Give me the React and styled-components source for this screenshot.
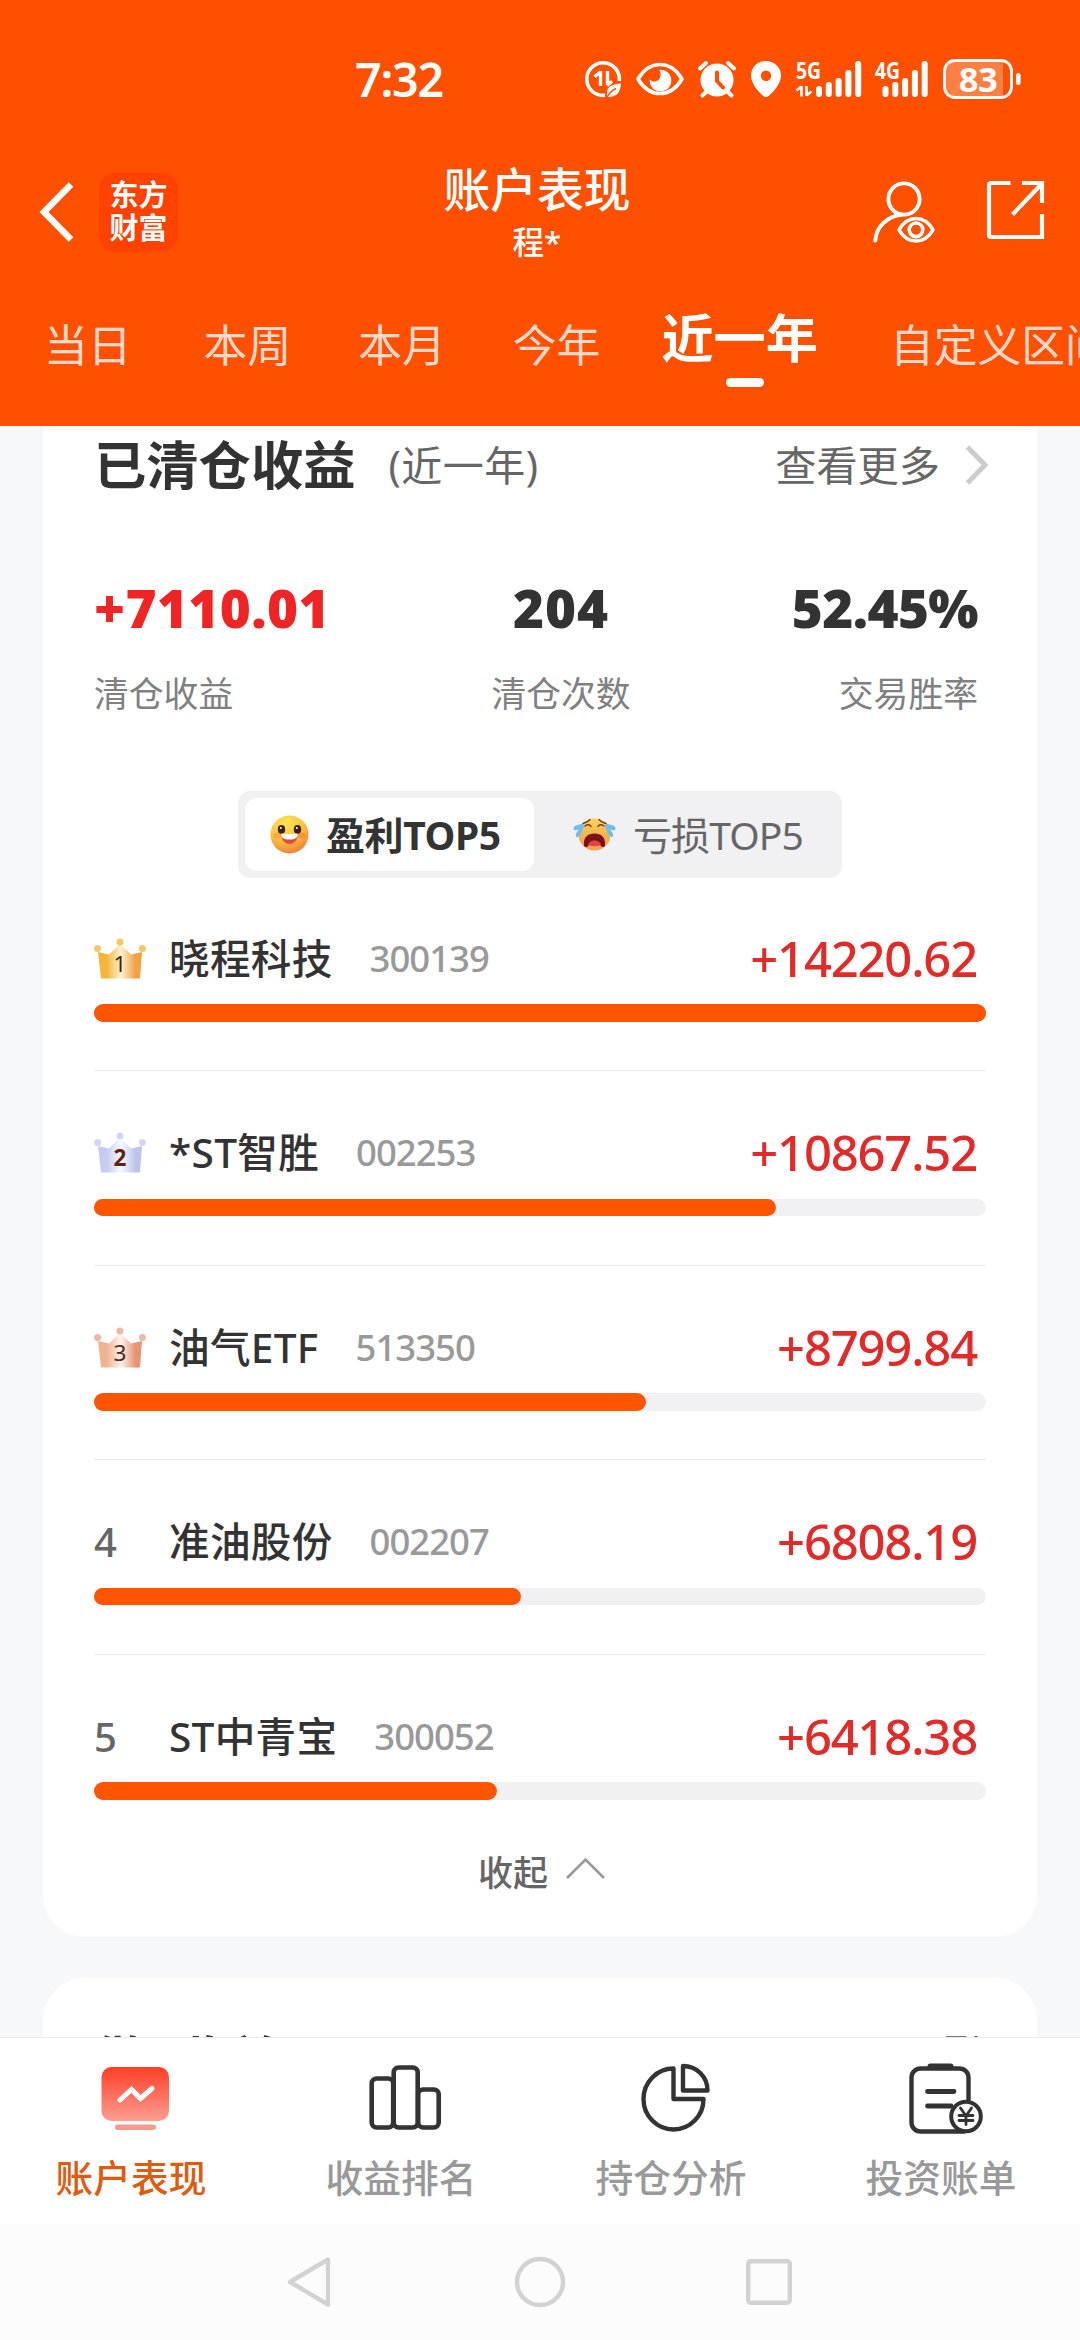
import { useState } from 'react'
import styled, { createGlobalStyle } from 'styled-components'

const GlobalStyle = createGlobalStyle`
    body {
        margin: 0;
        background: #f7f8fa;
        font-family: "Noto Sans", "Noto Sans CJK SC", sans-serif;
        color: #333;
    }
    * {
        box-sizing: border-box;
    }
    svg {
        display: block;
        flex-shrink: 0;
        overflow: visible;
    }
`

const Screen = styled.div`
    width: 1080px;
    height: 2340px;
    display: flex;
    flex-direction: column;
    overflow: hidden;
`

/* ---------- header ---------- */

const Header = styled.header`
    height: 426px;
    flex-shrink: 0;
    background: #ff5000;
    color: #fff;
    overflow: hidden;
`

const StatusBar = styled.div`
    height: 158px;
    padding: 0 59px 0 355px;
    display: flex;
    align-items: center;
    justify-content: space-between;
`

const Clock = styled.span`
    font-size: 46.5px;
    line-height: 60px;
    font-weight: 600;
    letter-spacing: -1.2px;
`

const StatusIcons = styled.div`
    display: flex;
    align-items: center;
    gap: 14.7px;
`

const TitleBar = styled.div`
    height: 108px;
    padding: 0 36px 0 30px;
    display: grid;
    grid-template-columns: 1fr auto 1fr;
    align-items: center;
`

const TitleLeft = styled.div`
    padding-left: 9px;
    display: flex;
    align-items: center;
    gap: 25px;
`

const BrandLogo = styled.div`
    width: 79px;
    height: 79px;
    border-radius: 16px;
    background: #ff4200;
    display: flex;
    flex-direction: column;
    align-items: center;
    justify-content: center;
    padding-bottom: 2px;
    font-size: 29px;
    line-height: 33.5px;
    font-weight: 700;
`

const TitleCenter = styled.div`
    text-align: center;
`

const Title = styled.h1`
    margin: 0;
    font-size: 46.8px;
    line-height: 56px;
    font-weight: 500;
`

const SubTitle = styled.div`
    margin-top: 4px;
    font-size: 31.5px;
    line-height: 42px;
    font-weight: 500;
`

const TitleRight = styled.div`
    display: flex;
    justify-content: flex-end;
    gap: 52px;
`

const Periods = styled.nav`
    display: flex;
    align-items: flex-start;
    padding: 45px 0 0 44px;
    white-space: nowrap;
`

const Period = styled.div`
    flex-shrink: 0;
    margin-left: ${({ $gap }) => $gap}px;
    font-size: ${({ $active }) => ($active ? '52.2px' : '43.8px')};
    line-height: ${({ $active }) => ($active ? '54px' : '69px')};
    font-weight: ${({ $active }) => ($active ? 700 : 400)};
    color: ${({ $active }) => ($active ? '#fff' : 'rgba(255, 255, 255, 0.8)')};

    &::after {
        content: '';
        display: ${({ $active }) => ($active ? 'block' : 'none')};
        width: 38px;
        height: 9px;
        margin: 13px auto 0;
        border-radius: 5px;
        background: #fff;
        transform: translateX(5px);
    }
`

/* ---------- content ---------- */

const Content = styled.main`
    flex: 1;
    min-height: 0;
    padding: 0 43px;
    overflow: hidden;
`

const Card = styled.section`
    height: 1511px;
    padding: 0 51px;
    background: #fff;
    border-radius: 0 0 42px 42px;
`

const NextCard = styled.section`
    height: 300px;
    margin-top: 41px;
    padding: 43px 51px 0;
    background: #fff;
    border-radius: 42px;
`

const CardHead = styled.div`
    height: 78px;
    margin-right: -4px;
    display: flex;
    align-items: center;
    justify-content: space-between;
`

const CardTitle = styled.h2`
    margin: 0;
    font-size: 52.3px;
    line-height: 78px;
    font-weight: 700;
`

const CardNote = styled.span`
    margin-left: 33px;
    font-size: 41px;
    line-height: 78px;
    letter-spacing: 0.5px;
    color: #666;
`

const HeadLeft = styled.div`
    display: flex;
    align-items: center;
`

const MoreLink = styled.div`
    display: flex;
    align-items: center;
    gap: 24px;
    padding-right: ${({ $inset }) => $inset || 0}px;
    font-size: 41.2px;
    line-height: 78px;
    color: #666;
`

const Stats = styled.div`
    display: flex;
    justify-content: space-between;
    padding: 72px 8px 0 0;
`

const Stat = styled.div`
    width: ${({ $wide }) => ($wide ? 290 : 240)}px;
    text-align: ${({ $align }) => $align};
`

const StatValue = styled.div`
    font-size: 53px;
    line-height: 64px;
    font-weight: 900;
    letter-spacing: ${({ $spacing }) => $spacing}px;
    color: ${({ $up }) => ($up ? '#ef2424' : '#333')};
`

const StatLabel = styled.div`
    margin-top: 35px;
    font-size: 34.8px;
    line-height: 37px;
    color: #808080;
`

const Toggle = styled.div`
    width: 604px;
    height: 87px;
    margin: 79px auto 0;
    padding: 7px;
    display: flex;
    border-radius: 12px;
    background: #f1f1f4;
`

const ToggleItem = styled.button`
    flex: ${({ $active }) => ($active ? '0 0 289px' : 1)};
    display: flex;
    align-items: center;
    gap: 17px;
    padding: 0 0 0 ${({ $active }) => ($active ? 25 : 39)}px;
    border: 0;
    border-radius: 12px;
    background: ${({ $active }) => ($active ? '#fff' : 'transparent')};
    color: ${({ $active }) => ($active ? '#333' : '#666')};
    font-family: inherit;
    font-size: 39px;
    line-height: 71px;
    font-weight: ${({ $active }) => ($active ? 700 : 400)};
    letter-spacing: ${({ $active }) => ($active ? -0.4 : -0.9)}px;
    white-space: nowrap;
`

const List = styled.ul`
    margin: 0;
    padding: 0;
    list-style: none;
    display: grid;
    gap: 1.5px;
`

const Row = styled.li`
    padding: 52.5px 0 48.5px;
    border-bottom: 1px solid #e9e9eb;

    &:last-child {
        padding-bottom: 0;
        border-bottom: 0;
    }
`

const RowLine = styled.div`
    height: 55px;
    padding-right: 9px;
    display: flex;
    align-items: center;
    line-height: 55px;
`

const Rank = styled.div`
    width: 75px;
    font-size: 40px;
    font-weight: 500;
    color: #666;
`

const StockName = styled.span`
    font-size: 40.6px;
    font-weight: 500;
    letter-spacing: 0.3px;
`

const StockCode = styled.span`
    margin-left: 37px;
    font-size: 36.5px;
    font-weight: 500;
    letter-spacing: -1px;
    color: #999;
`

const Profit = styled.span`
    margin-left: auto;
    font-size: 49px;
    font-weight: 500;
    letter-spacing: -1.2px;
    color: #e02b2b;
`

const Track = styled.div`
    height: 17.5px;
    margin-top: 18.5px;
    border-radius: 9px;
    background: #f1f1f3;
`

const Fill = styled.div`
    height: 100%;
    border-radius: 9px;
    background: #ff5500;
`

const Collapse = styled.div`
    margin-top: 52px;
    padding-left: 3px;
    display: flex;
    align-items: center;
    justify-content: center;
    gap: 18px;
    font-size: 35px;
    line-height: 41px;
    font-weight: 500;
    color: #666;

    svg {
        margin-bottom: 6px;
    }
`

/* ---------- bottom ---------- */

const TabBar = styled.nav`
    height: 187px;
    flex-shrink: 0;
    display: grid;
    grid-template-columns: repeat(4, 1fr);
    border-top: 1px solid #e8e8e8;
    background: #fff;
`

const Tab = styled.div`
    display: flex;
    flex-direction: column;
    align-items: center;
    padding-top: 22px;
`

const TabLabel = styled.span`
    margin-top: 22px;
    padding-right: 8px;
    font-size: 37.7px;
    line-height: 48px;
    font-weight: 500;
    color: ${({ $active }) => ($active ? '#dc5c14' : '#999')};
`

const SystemNav = styled.div`
    height: 116px;
    flex-shrink: 0;
    display: flex;
    align-items: center;
    justify-content: center;
    gap: 180px;
    background: #fcfcfc;
`

/* ---------- icons ---------- */

const DataSaverIcon = () => (
    <svg width="36" height="36" viewBox="0 0 36 36" fill="none" stroke="#fff">
        <path d="M34.3 20A16.3 16.3 0 1 0 20 34.3" strokeWidth="3.6" />
        <path d="M15.5 10v15M9.500 15.800l6-5" strokeWidth="3.4" />
        <path d="M22.500 10v14M22 24.400l5-4.200" strokeWidth="3.4" />
        <path d="M36 22.500C28 23 21.500 25.500 22 32c0 2 .8 3.200 1.500 4 7 0 12-3.500 12.500-13.500z" fill="#fff" stroke="none" />
        <path d="M23 35c2-4 4.500-6 8-7.500" stroke="#ff5000" strokeWidth="1.400" />
    </svg>
)

const EyeIcon = () => (
    <svg width="48" height="36" viewBox="0 0 48 36">
        <circle cx="24.500" cy="19.500" r="10.800" fill="#fff" />
        <path d="M12 6h9c5 4 5 13-1.500 14.500C15 21 13 18.500 12 14z" fill="#ff5000" />
        <path d="M2 18C8 8 15.500 3.500 24 3.500S40 8 46 18C40 28 32.500 32.500 24 32.500S8 28 2 18z" fill="none" stroke="#fff" strokeWidth="3.600" strokeLinejoin="round" />
    </svg>
)

const AlarmIcon = () => (
    <svg width="38" height="36" viewBox="0 0 38 36" fill="none" stroke="#fff" strokeLinecap="round">
        <circle cx="19" cy="19" r="16.500" fill="#fff" stroke="none" />
        <path d="M2 7.500L8 2M36 7.500L30 2M9 30l-4.500 4.500M29 30l4.500 4.500" strokeWidth="4" />
        <path d="M19 11.500v8.500l6 6.500" stroke="#ff5000" strokeWidth="4" strokeLinejoin="round" />
    </svg>
)

const PinIcon = () => (
    <svg width="30" height="36" viewBox="0 0 30 36">
        <path fillRule="evenodd" fill="#fff" d="M15 0C6.500 0 0 6.500 0 14.500 0 22 6 29.500 12.300 35c1.700 1.400 3.700 1.400 5.400 0C24 29.500 30 22 30 14.500 30 6.500 23.500 0 15 0zm0 9.500a5.200 5.200 0 1 1 0 10.400 5.200 5.200 0 0 1 0-10.400z" />
    </svg>
)

const barTops = [25, 21, 17, 9, 0]

const SignalIcon = ({ label, width, first, arrows }) => (
    <svg width={width} height="36" viewBox={`0 0 ${width} 36`}>
        <text x="0" y="17.500" fontSize="24" fontWeight="700" fill="#fff" textLength="25" lengthAdjust="spacingAndGlyphs">{label}</text>
        {arrows && <path d="M5.500 25v10.500M0.500 29.500l5-4M10.500 25v10M10.500 34.500l5-4" stroke="#fff" strokeWidth="2.600" fill="none" />}
        {barTops.map((top, i) => (
            <rect key={top} x={first + i * 9.8} y={top} width="6" height={36 - top} rx="3" fill="#fff" />
        ))}
    </svg>
)

const BatteryIcon = () => (
    <svg width="78" height="40" viewBox="0 0 78 40">
        <path d="M12 1.500h48v37H12A10.500 10.500 0 0 1 1.500 28V12A10.500 10.500 0 0 1 12 1.500z" fill="#ff7f43" />
        <rect x="1.500" y="1.500" width="67" height="37" rx="10.500" fill="none" stroke="#fff" strokeWidth="2.800" />
        <rect x="73" y="14" width="4.600" height="12" rx="2.300" fill="#fff" />
        <text x="35" y="32.500" textAnchor="middle" fontSize="34.500" fontWeight="700" letterSpacing="-0.5" fill="#fff">83</text>
    </svg>
)

const BackIcon = () => (
    <svg width="35" height="60" viewBox="0 0 35 60" fill="none" stroke="#fff" strokeWidth="6.500">
        <path d="M32 2.500L5 30l27 27.500" />
    </svg>
)

const UserEyeIcon = () => (
    <svg width="62" height="62" viewBox="0 0 62 62" fill="none" stroke="#fff" strokeWidth="3.900" strokeLinecap="round" strokeLinejoin="round">
        <circle cx="31" cy="18" r="15.600" />
        <path d="M29 33.500C14 35 3 46.500 2.300 59.500" />
        <path d="M26 48.800C30.500 41 36.500 37.500 43 37.500S55.500 41 60 48.800C55.500 56.500 49.500 60 43 60S30.500 56.500 26 48.800z" strokeWidth="3.600" />
        <circle cx="43" cy="48.800" r="6.800" strokeWidth="3.600" />
    </svg>
)

const ShareIcon = () => (
    <svg width="57" height="58" viewBox="0 0 57 58" fill="none" stroke="#fff" strokeWidth="4.200">
        <path d="M23.500 2H4a2 2 0 0 0-2 2v50a2 2 0 0 0 2 2h51V33" />
        <path d="M35 2h20v20M25.500 33.500L55 2.500" />
    </svg>
)

const ArrowRight = () => (
    <svg width="26" height="40" viewBox="0 0 26 40" fill="none" stroke="#ccc" strokeWidth="5">
        <path d="M3.500 2l17.500 18L3.500 38" />
    </svg>
)

const ArrowUp = () => (
    <svg width="39" height="24" viewBox="0 0 39 24" fill="none" stroke="#999" strokeWidth="2.600">
        <path d="M1 21L19.500 2.500 38 21" />
    </svg>
)

const HappyFace = () => (
    <svg width="39" height="39" viewBox="0 0 39 39">
        <defs>
            <radialGradient id="happy" cx="0.4" cy="0.2" r="0.85">
                <stop offset="0" stopColor="#ffe552" />
                <stop offset="0.55" stopColor="#fdc23c" />
                <stop offset="1" stopColor="#ee7a3c" />
            </radialGradient>
        </defs>
        <circle cx="19.500" cy="19.500" r="19" fill="url(#happy)" />
        <ellipse cx="7.500" cy="20.500" rx="4" ry="3" fill="#fb9c3c" opacity="0.7" />
        <ellipse cx="31.500" cy="20.500" rx="4" ry="3" fill="#f5853a" opacity="0.7" />
        <ellipse cx="11.500" cy="14.500" rx="3.700" ry="4.400" fill="#3d2112" />
        <ellipse cx="27.500" cy="14.500" rx="3.700" ry="4.400" fill="#3d2112" />
        <circle cx="10.800" cy="13" r="1" fill="#fff" />
        <circle cx="26.800" cy="13" r="1" fill="#fff" />
        <path d="M11.500 19.500h16c0 6-3.500 9.500-8 9.500s-8-3.500-8-9.500z" fill="#e8483e" />
        <path d="M11.500 18.500c5 .8 11 .8 16 0 .5 4-2 6-8 6s-8.500-2-8-6z" fill="#fff" />
    </svg>
)

const CryingFace = () => (
    <svg width="43" height="35" viewBox="0 0 43 35">
        <defs>
            <linearGradient id="cry" x1="0" y1="0" x2="0" y2="1">
                <stop offset="0" stopColor="#fbd45a" />
                <stop offset="0.6" stopColor="#f5ae52" />
                <stop offset="1" stopColor="#f2a055" />
            </linearGradient>
        </defs>
        <circle cx="21.500" cy="17.500" r="16" fill="url(#cry)" />
        <path d="M10 6.500c3-1 5-1.500 7-4M12 9c3-2 5-1.500 6 .5M33 6.500c-3-1-5-1.500-7-4M31 9c-3-2-5-1.500-6 .5" fill="none" stroke="#6e3b22" strokeWidth="1.400" strokeLinecap="round" />
        <path d="M11 29c-1-9 4-12.500 10.500-12.500S33 20 32 29c-2 2-3.500 1-5-1H16c-1.500 2-3 3-5 1z" fill="#7d1119" />
        <path d="M15 28c1-3.500 4-4.500 6.500-4.500S27 24.500 28 28c-3 1.500-10 1.500-13 0z" fill="#e0423f" />
        <path d="M11 7C4 7 0 9.500 0.500 12c.8 2 5 1.500 7-1-3 3-5.500 6-4.500 8.500 1.500 2 6-1 8-12.500zM32 7c7 0 11 2.500 10.500 5-.8 2-5 1.500-7-1 3 3 5.500 6 4.500 8.500-1.500 2-6-1-8-12.500z" fill="#6fbdee" />
    </svg>
)

const crownColors = {
    1: ['#f5b53c', '#fff3cf', '#f2a144', '#f6c766', '#4a2314'],
    2: ['#c7cbee', '#f8f9ff', '#bfc3e9', '#d2d6f3', '#5e2418'],
    3: ['#f0b392', '#fff3ec', '#e59474', '#efb8a2', '#54281b'],
}

const Crown = ({ rank }) => {
    const [left, middle, right, ball, digit] = crownColors[rank]
    return (
        <svg width="52" height="41" viewBox="0 0 52 41">
            <defs>
                <linearGradient id={`crown${rank}`}>
                    <stop offset="0" stopColor={left} />
                    <stop offset="0.2" stopColor={left} />
                    <stop offset="0.52" stopColor={middle} />
                    <stop offset="0.85" stopColor={right} />
                    <stop offset="1" stopColor={right} />
                </linearGradient>
            </defs>
            <path d="M4 14L15 16.500 26 6l11 10.500L48 14 46 40.500H7z" fill={`url(#crown${rank})`} />
            <circle cx="26" cy="4" r="3.500" fill={ball} />
            <circle cx="3.600" cy="10.500" r="3.500" fill={ball} />
            <circle cx="48.400" cy="10.500" r="3.500" fill={ball} />
            <text x="26" y="34" textAnchor="middle" fontSize="22.500" fontWeight={rank === 2 ? 700 : 400} fill={digit}>{rank}</text>
        </svg>
    )
}

const PerformanceIcon = () => (
    <svg width="72" height="72" viewBox="0 0 72 72">
        <defs>
            <linearGradient id="screen" x1="0" y1="0" x2="0" y2="1">
                <stop offset="0" stopColor="#ff3d25" />
                <stop offset="1" stopColor="#fc9f92" />
            </linearGradient>
        </defs>
        <rect x="2.500" y="7" width="67.500" height="54" rx="10" fill="url(#screen)" />
        <path d="M21 40l11.500-10.500 9 9L53 28.500" fill="none" stroke="#fff" strokeWidth="5" strokeLinecap="round" />
        <rect x="16" y="64.500" width="41" height="5.500" rx="2.700" fill="#f59a8e" />
    </svg>
)

const RankingIcon = () => (
    <svg width="72" height="72" viewBox="0 0 72 72" fill="none" stroke="#333" strokeWidth="4.600">
        <rect x="2.700" y="18.500" width="21.500" height="49" rx="5" />
        <rect x="24.700" y="7.500" width="24" height="60" rx="5" />
        <rect x="49.200" y="29.500" width="20.500" height="38" rx="5" />
    </svg>
)

const PieIcon = () => (
    <svg width="72" height="72" viewBox="0 0 72 72" fill="none" stroke="#333" strokeWidth="4.400">
        <path d="M34.500 8.500a30 30.500 0 1 0 30 30.500h-30z" strokeLinejoin="round" />
        <path d="M44 6v24.500h24.500C68.500 16.500 57.500 6 44 6z" strokeLinejoin="round" />
    </svg>
)

const BillIcon = () => (
    <svg width="76" height="72" viewBox="0 0 76 72" fill="none" stroke="#333" strokeWidth="4.400" strokeLinecap="round">
        <path d="M57 71.500H13.500A9 9 0 0 1 4.500 62.500V17.500a9 9 0 0 1 9-9h39a9 9 0 0 1 9 9V40" />
        <path d="M23.500 6.500h20" strokeWidth="6" />
        <path d="M20.500 31.500H47M20.500 46H44" strokeWidth="4.800" />
        <circle cx="59" cy="56.500" r="14.800" fill="#fff" strokeWidth="4" />
        <path d="M53.500 48l5.500 8 5.500-8M59 56v8.500M52 55.500h14M52 60.500h14" strokeWidth="2.800" />
    </svg>
)

const NextCardIcon = () => (
    <svg width="38" height="50" viewBox="0 0 38 50" fill="none" stroke="#777" strokeWidth="3">
        <path d="M2 2.500h19v16H3v16h18v14H10" />
        <path d="M32 1v48" stroke="#555" />
    </svg>
)

const periods = [
    { name: '当日', gap: 0 },
    { name: '本周', gap: 72 },
    { name: '本月', gap: 67 },
    { name: '今年', gap: 67 },
    { name: '近一年', gap: 61 },
    { name: '自定义区间', gap: 72 },
]

const stocks = [
    { name: '晓程科技', code: '300139', profit: 14220.62 },
    { name: '*ST智胜', code: '002253', profit: 10867.52 },
    { name: '油气ETF', code: '513350', profit: 8799.84 },
    { name: '准油股份', code: '002207', profit: 6808.19 },
    { name: 'ST中青宝', code: '300052', profit: 6418.38 },
]

const tabs = [
    { label: '账户表现', Icon: PerformanceIcon },
    { label: '收益排名', Icon: RankingIcon },
    { label: '持仓分析', Icon: PieIcon },
    { label: '投资账单', Icon: BillIcon },
]

const StockRow = ({ stock, rank, max }) => (
    <Row>
        <RowLine>
            <Rank>{rank <= 3 ? <Crown rank={rank} /> : rank}</Rank>
            <StockName>{stock.name}</StockName>
            <StockCode>{stock.code}</StockCode>
            <Profit>+{stock.profit.toFixed(2)}</Profit>
        </RowLine>
        <Track>
            <Fill style={{ width: `${(stock.profit / max) * 100}%` }} />
        </Track>
    </Row>
)

const App = () => {
    const [period, setPeriod] = useState('近一年')

    return (
        <Screen>
            <GlobalStyle />
            <Header>
                <StatusBar>
                    <Clock>7:32</Clock>
                    <StatusIcons>
                        <DataSaverIcon />
                        <EyeIcon />
                        <AlarmIcon />
                        <PinIcon />
                        <SignalIcon label="5G" width={65} first={20} arrows />
                        <SignalIcon label="4G" width={53} first={7.5} />
                        <BatteryIcon />
                    </StatusIcons>
                </StatusBar>
                <TitleBar>
                    <TitleLeft>
                        <BackIcon />
                        <BrandLogo>
                            <span>东方</span>
                            <span>财富</span>
                        </BrandLogo>
                    </TitleLeft>
                    <TitleCenter>
                        <Title>账户表现</Title>
                        <SubTitle>程*</SubTitle>
                    </TitleCenter>
                    <TitleRight>
                        <UserEyeIcon />
                        <ShareIcon />
                    </TitleRight>
                </TitleBar>
                <Periods>
                    {periods.map(({ name, gap }) => (
                        <Period key={name} $gap={gap} $active={name === period} onClick={() => setPeriod(name)}>
                            {name}
                        </Period>
                    ))}
                </Periods>
            </Header>

            <Content>
                <Card>
                    <CardHead>
                        <HeadLeft>
                            <CardTitle>已清仓收益</CardTitle>
                            <CardNote>(近一年)</CardNote>
                        </HeadLeft>
                        <MoreLink>查看更多 <ArrowRight /></MoreLink>
                    </CardHead>

                    <Stats>
                        <Stat $align="left" $wide>
                            <StatValue $up $spacing={0.4}>+7110.01</StatValue>
                            <StatLabel>清仓收益</StatLabel>
                        </Stat>
                        <Stat $align="center">
                            <StatValue $spacing={1}>204</StatValue>
                            <StatLabel>清仓次数</StatLabel>
                        </Stat>
                        <Stat $align="right">
                            <StatValue $spacing={-0.6}>52.45%</StatValue>
                            <StatLabel>交易胜率</StatLabel>
                        </Stat>
                    </Stats>

                    <Toggle>
                        <ToggleItem $active><HappyFace />盈利TOP5</ToggleItem>
                        <ToggleItem><CryingFace />亏损TOP5</ToggleItem>
                    </Toggle>

                    <List>
                        {stocks.map((stock, i) => (
                            <StockRow key={stock.code} stock={stock} rank={i + 1} max={stocks[0].profit} />
                        ))}
                    </List>

                    <Collapse>收起 <ArrowUp /></Collapse>
                </Card>

                <NextCard>
                    <CardHead>
                        <CardTitle>做T收益</CardTitle>
                        <MoreLink $inset={8}><NextCardIcon /></MoreLink>
                    </CardHead>
                </NextCard>
            </Content>

            <TabBar>
                {tabs.map(({ label, Icon }, i) => (
                    <Tab key={label}>
                        <Icon />
                        <TabLabel $active={i === 0}>{label}</TabLabel>
                    </Tab>
                ))}
            </TabBar>

            <SystemNav>
                <svg width="46" height="52" viewBox="0 0 46 52" fill="none" stroke="#d2d2d2" strokeWidth="4.4" strokeLinejoin="round">
                    <path d="M40 3.500v45L2 26z" />
                </svg>
                <svg width="52" height="52" viewBox="0 0 52 52" fill="none" stroke="#d2d2d2" strokeWidth="4.4">
                    <circle cx="26" cy="26" r="23" />
                </svg>
                <svg width="46" height="46" viewBox="0 0 46 46" fill="none" stroke="#d2d2d2" strokeWidth="4.4">
                    <rect x="2.200" y="2.200" width="41.600" height="41.600" rx="2.500" />
                </svg>
            </SystemNav>
        </Screen>
    )
}

export default App
